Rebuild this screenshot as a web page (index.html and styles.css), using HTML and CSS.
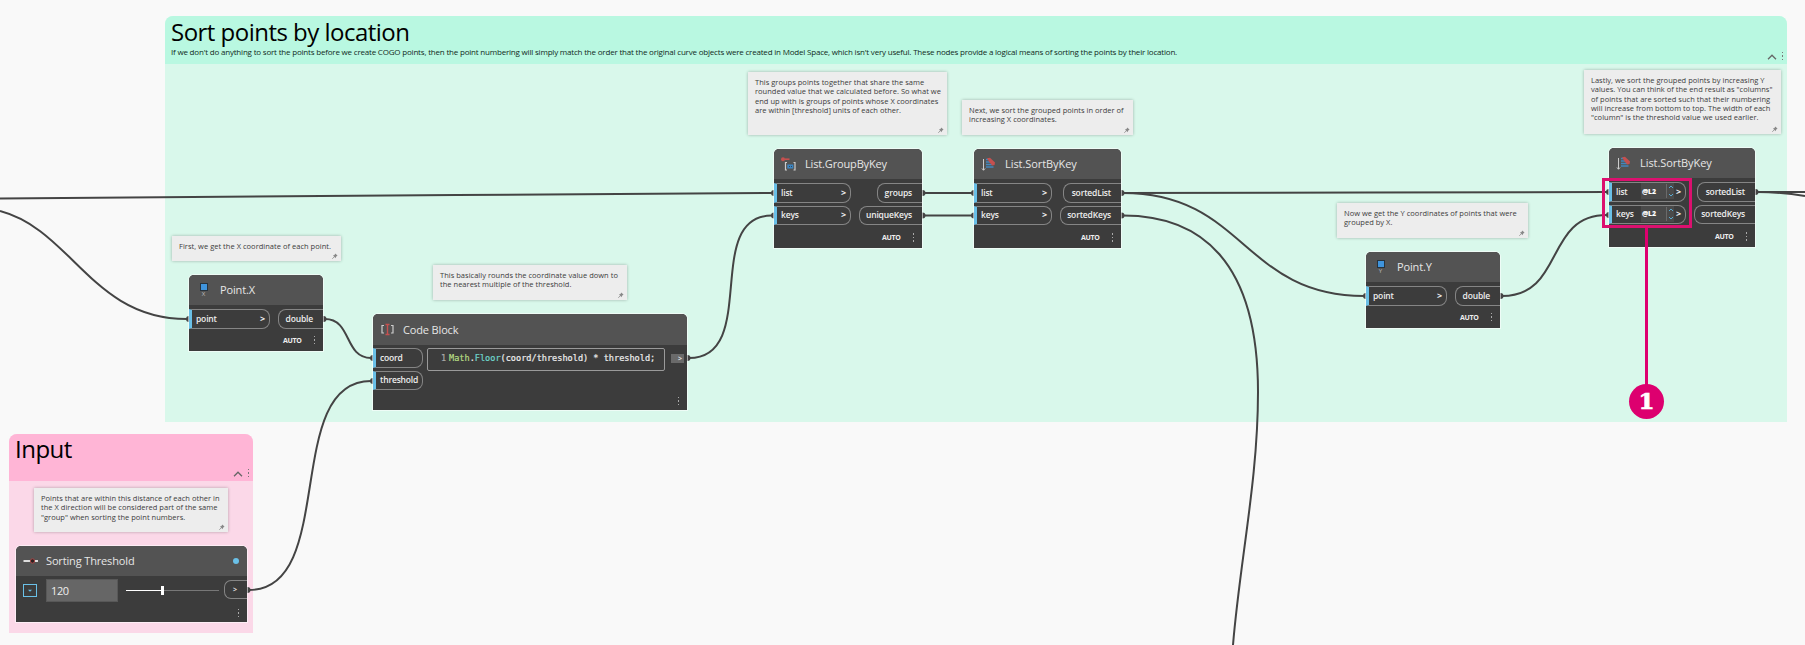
FILE: index.html
```html
<!DOCTYPE html>
<html lang="en">
<head>
<meta charset="utf-8">
<title>Sort points by location</title>
<link rel="stylesheet" href="styles.css">
</head>
<body>
<svg class="defs" width="0" height="0">
  <defs>
    <symbol id="pin" viewBox="0 0 6 6"><path d="M3.300 .4 5.600 2.700 4.900 3 3.900 4 3.700 5.200 .9 2.400 2.100 2.200 3 1.200Z" fill="#888"/><path d="M2.200 3.900.3 5.800" stroke="#888" stroke-width=".8"/></symbol>
    <symbol id="sort" viewBox="0 0 15 15"><path d="M2.500 2V13M1 11.500 2.500 13.300 4 11.500" fill="none" stroke="#ccc"/><path d="M5 2.500H7.500M5 5H9M5 7.500H11M5 10H12.500" stroke="#4387bd" stroke-width="1.400"/><path d="M6 1.200 9 .8 14 5.500 13.600 8 11.200 8.500 8.300 5Z" fill="#c5504f"/></symbol>
  </defs>
</svg>
<main class="canvas">
  <section class="group group-sort">
    <header class="group-head">
      <h1>Sort points by location</h1>
      <p>If we don't do anything to sort the points before we create COGO points, then the point numbering will simply match the order that the original curve objects were created in Model Space, which isn't very useful. These nodes provide a logical means of sorting the points by their location.</p>
      <div class="group-tools"><svg width="10" height="6"><path d="M1 5.200 5 1.200 9 5.200"/></svg><i class="dots"></i></div>
    </header>
  </section>
  <section class="group group-input">
    <header class="group-head">
      <h1>Input</h1>
      <div class="group-tools"><svg width="10" height="6"><path d="M1 5.200 5 1.200 9 5.200"/></svg><i class="dots"></i></div>
    </header>
  </section>

  <svg class="wires" width="1805" height="645">
    <path d="M0 198.500C300 198.500 500 193 772 193"/>
    <path d="M0 211C72 230 92 319 187 319"/>
    <path d="M325 319C352 319 344 358 371 358"/>
    <path d="M249 590C338 590 282 381 371 381"/>
    <path d="M689 358C760 358 702 215.500 772 215.500"/>
    <path d="M924 193H972M924 215.500H972"/>
    <path d="M1123 193C1280 193 1450 192 1607 192"/>
    <path d="M1123 193C1245 193 1243 296 1364 296"/>
    <path d="M1123 215.500C1200 215.500 1258 260 1258 392C1258 480 1240 560 1233 645"/>
    <path d="M1502 296C1565 296 1544 215 1607 215"/>
    <path d="M1757 192H1805M1757 192C1775 192 1790 193.500 1805 196"/>
    <g class="ends">
      <circle cx="189" cy="319" r="3"/><circle cx="323.500" cy="319" r="3"/><circle cx="373" cy="358" r="3"/><circle cx="373" cy="381" r="3"/>
      <circle cx="247.500" cy="590" r="3"/><circle cx="687.500" cy="358" r="3"/><circle cx="774" cy="193" r="3"/><circle cx="774" cy="215.500" r="3"/>
      <circle cx="922.500" cy="193" r="3"/><circle cx="922.500" cy="215.500" r="3"/><circle cx="974" cy="193" r="3"/><circle cx="974" cy="215.500" r="3"/>
      <circle cx="1121.500" cy="193" r="3"/><circle cx="1121.500" cy="215.500" r="3"/><circle cx="1366" cy="296" r="3"/><circle cx="1500.500" cy="296" r="3"/>
      <circle cx="1609" cy="192" r="3"/><circle cx="1609" cy="215" r="3"/><circle cx="1755.500" cy="192" r="3"/>
    </g>
  </svg>

  <aside class="note note-x"><span>First, we get the X coordinate of each point.</span><svg class="pin"><use href="#pin"/></svg></aside>
  <aside class="note note-floor"><span>This basically rounds the coordinate value down to</span><span>the nearest multiple of the threshold.</span><svg class="pin"><use href="#pin"/></svg></aside>
  <aside class="note note-group"><span>This groups points together that share the same</span><span>rounded value that we calculated before. So what we</span><span>end up with is groups of points whose X coordinates</span><span>are within [threshold] units of each other.</span><svg class="pin"><use href="#pin"/></svg></aside>
  <aside class="note note-next"><span>Next, we sort the grouped points in order of</span><span>increasing X coordinates.</span><svg class="pin"><use href="#pin"/></svg></aside>
  <aside class="note note-y"><span>Now we get the Y coordinates of points that were</span><span>grouped by X.</span><svg class="pin"><use href="#pin"/></svg></aside>
  <aside class="note note-last"><span>Lastly, we sort the grouped points by increasing Y</span><span>values. You can think of the end result as "columns"</span><span>of points that are sorted such that their numbering</span><span>will increase from bottom to top. The width of each</span><span>"column" is the threshold value we used earlier.</span><svg class="pin"><use href="#pin"/></svg></aside>
  <aside class="note note-input"><span>Points that are within this distance of each other in</span><span>the X direction will be considered part of the same</span><span>"group" when sorting the point numbers.</span><svg class="pin"><use href="#pin"/></svg></aside>

  <article class="node node-px">
    <header><div class="axis"><i></i><small>X</small></div><h2>Point.X</h2></header>
    <div class="ports">
      <div class="row"><div class="in"><span>point</span><b>&gt;</b></div><div class="out">double</div></div>
    </div>
    <footer><span>AUTO</span><i class="dots"></i></footer>
  </article>

  <article class="node node-code">
    <header><svg class="icon" viewBox="0 0 15 15"><path d="M4 3.500H2V11H4M11 3.500H13V11H11" fill="none" stroke="#ccc" stroke-width="1.200"/><path d="M5.500 2.500H9.500M5.500 12.500H9.500M7.500 2.500V12.500" fill="none" stroke="#c5504f" stroke-width="1.400"/></svg><h2>Code Block</h2></header>
    <div class="code-body">
      <div class="ports">
        <div class="row"><div class="in"><span>coord</span></div></div>
        <div class="row"><div class="in"><span>threshold</span></div></div>
      </div>
      <div class="editor"><span class="ln">1</span><code><span class="cls">Math</span>.<span class="fn">Floor</span>(coord/threshold) * threshold;</code></div>
      <div class="code-out">&gt;</div>
    </div>
    <footer><i class="dots"></i></footer>
  </article>

  <article class="node node-group">
    <header><svg class="icon" viewBox="0 0 15 15"><circle cx="2" cy="2.200" r="2" fill="#c5504f"/><path d="M3.500 2.200H8.500" stroke="#c5504f" stroke-width="1.600"/><path d="M6 5.500H4.500V13H6M12.500 5.500H14V13H12.500" fill="none" stroke="#ccc" stroke-width="1.200"/><path d="M6.300 7.500H12.300V11.500H6.300Z" fill="#3b86c4"/><path d="M8 9.500H8.800M10 9.500H10.800" stroke="#333"/></svg><h2>List.GroupByKey</h2></header>
    <div class="ports">
      <div class="row"><div class="in"><span>list</span><b>&gt;</b></div><div class="out">groups</div></div>
      <div class="row"><div class="in"><span>keys</span><b>&gt;</b></div><div class="out wide">uniqueKeys</div></div>
    </div>
    <footer><span>AUTO</span><i class="dots"></i></footer>
  </article>

  <article class="node node-sort">
    <header><svg class="icon"><use href="#sort"/></svg><h2>List.SortByKey</h2></header>
    <div class="ports">
      <div class="row"><div class="in"><span>list</span><b>&gt;</b></div><div class="out">sortedList</div></div>
      <div class="row"><div class="in"><span>keys</span><b>&gt;</b></div><div class="out wide">sortedKeys</div></div>
    </div>
    <footer><span>AUTO</span><i class="dots"></i></footer>
  </article>

  <article class="node node-py">
    <header><div class="axis"><i></i><small>Y</small></div><h2>Point.Y</h2></header>
    <div class="ports">
      <div class="row"><div class="in"><span>point</span><b>&gt;</b></div><div class="out">double</div></div>
    </div>
    <footer><span>AUTO</span><i class="dots"></i></footer>
  </article>

  <article class="node node-sort node-levels">
    <header><svg class="icon"><use href="#sort"/></svg><h2>List.SortByKey</h2></header>
    <div class="ports">
      <div class="row"><div class="in"><span>list</span><div class="level"><em>@L2</em><svg width="8" height="14"><path d="M2 4 4 2 6 4M2 10 4 12 6 10"/></svg></div><b>&gt;</b></div><div class="out">sortedList</div></div>
      <div class="row"><div class="in"><span>keys</span><div class="level"><em>@L2</em><svg width="8" height="14"><path d="M2 4 4 2 6 4M2 10 4 12 6 10"/></svg></div><b>&gt;</b></div><div class="out wide">sortedKeys</div></div>
    </div>
    <footer><span>AUTO</span><i class="dots"></i></footer>
  </article>

  <article class="node node-thr">
    <header><svg class="icon" viewBox="0 0 15 15"><path d="M.5 7H8M11 7H15" stroke="#ddd" stroke-width="2"/><circle cx="9.500" cy="7" r="2.200" fill="#2c2222" stroke="#a84848"/></svg><h2>Sorting Threshold</h2><i class="status"></i></header>
    <div class="slider-row">
      <div class="toggle"><svg width="12" height="11"><path d="M4 4.800H8L6 6.800Z" fill="#6ac0e7"/></svg></div>
      <div class="value">120</div>
      <div class="slider"><i></i></div>
      <div class="thr-out">&gt;</div>
    </div>
    <footer><i class="dots"></i></footer>
  </article>

  <div class="highlight"></div>
  <div class="leader"></div>
  <div class="callout">1</div>
</main>
</body>
</html>
```
FILE: styles.css
```css
*{box-sizing:border-box;margin:0}
body{background:#f9f9f9;font-family:"Open Sans","Noto Sans",sans-serif;overflow:hidden}
i,em{font-style:normal}
.defs{position:absolute}
.canvas{position:relative;width:1805px;height:645px;overflow:hidden}
.group,.note,.node,.wires,.highlight,.leader,.callout{position:absolute}
.dots{display:block;width:1.500px;height:9px;background:repeating-linear-gradient(currentColor 0 1.500px,transparent 1.500px 3.500px)}

/* groups */
.group{border-radius:8px 8px 0 0;overflow:hidden}
.group-head{position:relative;padding:1px 6px 0;color:#000}
.group-sort{left:165px;top:16px;width:1622px;height:405.500px;background:#d9f8eb}
.group-sort .group-head{height:48px;background:#b9f8e1}
.group-input{left:9px;top:434px;width:244px;height:199px;background:#fbd8e8}
.group-input .group-head{height:47px;padding-top:0;background:#ffb5d6}
.group h1{font-size:24px;font-weight:400;line-height:30px;letter-spacing:-.52px;white-space:nowrap}
.group p{font-size:8px;line-height:10px;letter-spacing:-.195px;white-space:nowrap;color:#102a22}
.group-tools{position:absolute;right:4px;bottom:3px;display:flex;align-items:center;gap:5px;color:#777}
.group-tools path{fill:none;stroke:#666;stroke-width:1.300}

/* wires */
.wires{left:0;top:0}
.wires path{fill:none;stroke:#444;stroke-width:2}
.wires .ends{fill:#444}

/* notes */
.note{padding:6px 7px 0;background:#ededed;color:#3c3c3c;font-size:7.500px;line-height:9.250px;letter-spacing:.02px;box-shadow:0 0 3px rgba(0,0,0,.28)}
.note span{display:block;white-space:nowrap}
.pin{position:absolute;right:3px;bottom:2px;width:6px;height:6px}
.note-x{left:172px;top:236px;width:169px;height:25px}
.note-floor{left:433px;top:265px;width:194px;height:35px}
.note-group{left:748px;top:72px;width:199px;height:63px}
.note-next{left:962px;top:100px;width:171px;height:35px}
.note-y{left:1337px;top:203px;width:191px;height:35px}
.note-last{left:1584px;top:70px;width:197px;height:64px}
.note-input{left:34px;top:488px;width:194px;height:44px}

/* nodes */
.node{display:flex;flex-direction:column;background:#3c3c3c;color:#eee;border-radius:5px 5px 0 0;box-shadow:0 0 0 1px rgba(255,255,255,.55)}
.node header{display:flex;align-items:center;height:30px;padding-left:7px;background:#535353;border-radius:5px 5px 0 0}
.node h2{padding-bottom:1px;font-size:11px;font-weight:500;letter-spacing:-.15px;white-space:nowrap;color:#e6e6e6}
.icon{width:15px;height:15px;margin-right:8px;overflow:visible}
.axis{display:flex;flex-direction:column;align-items:center;width:15px;margin-right:8px;padding-top:3px}
.axis i{width:6px;height:6px;background:#3f94dc;outline:1px solid #27333d}
.axis small{font-size:6px;line-height:9px;color:#bbb}
.ports{display:flex;flex-direction:column;gap:3px;padding-top:4px}
.row{display:flex;justify-content:space-between;height:19.500px;font-size:8.500px;font-weight:600;letter-spacing:-.17px}
.in{display:flex;align-items:center;justify-content:space-between;width:77px;padding:0 4px 1px;border:1px solid #858585;border-left:3px solid #6ac0e7;border-radius:0 8px 8px 0}
.in b{font-size:9px;font-weight:700}
.out{display:flex;align-items:center;justify-content:flex-end;width:45px;padding:0 10px 1px 0;border:1px solid #858585;border-right:0;border-radius:8px 0 0 8px}
.node footer{display:flex;align-items:center;justify-content:flex-end;gap:12px;flex:1;padding:2px 8px 0 0;font-size:7px;font-weight:700;letter-spacing:-.3px}
.node footer .dots{color:#aaa}

.node-px{left:189px;top:275px;width:134px;height:76px}
.node-py{left:1366px;top:252px;width:134px;height:76px}
.node-px .in,.node-py .in{width:81px}
.node-px h2,.node-py h2{padding-left:1px}
.node-group{left:774px;top:149px;width:148px;height:99px}
.node-group h2{padding-left:1px}
.node-group .wide{width:63px}
.node-sort{left:974px;top:149px;width:147px;height:99px}
.node-sort h2{padding-left:1px;letter-spacing:-.07px}
.node-sort .in{width:78px}
.node-sort .out{width:58px}
.node-sort .wide{width:61px}
.node-levels{left:1609px;top:148px;width:146px}
.node-levels .in{width:77px}
.node-levels .in span{width:24px}
.level{display:flex;align-items:center;justify-content:space-between;width:33px;height:16px;margin-left:-1px;background:#4a4a4a}
.level em{padding-left:1px;font-size:7px;font-weight:800;letter-spacing:-.2px;color:#fff}
.level svg{border-left:1px solid #6a6a6a}
.level path{fill:none;stroke:#58a9cf}

/* code block */
.node-code{left:373px;top:314px;width:314px;height:96px}
.node-code header{height:31px}
.code-body{display:flex;align-items:flex-start}
.node-code .ports{padding-top:3px}
.node-code .in{width:50px}
.editor{display:flex;align-items:center;width:238px;height:23px;margin:3px 0 0 4px;padding:0 0 3px 13px;border:1px solid #9a9a9a;border-radius:2px;font:8.570px "DejaVu Sans Mono",monospace;-webkit-text-stroke:.2px;white-space:pre}
.editor .ln{width:8px;color:#aaa}
.editor code{font:inherit}
.cls{color:#b5dc84}
.fn{color:#6fd6cc}
.code-out{width:13px;height:9px;margin:9px 0 0 6px;padding-right:2px;background:#6a6a6a;font-size:7px;line-height:9px;font-weight:600;text-align:right}

/* number slider */
.node-thr{left:16px;top:546px;width:231px;height:76px}
.status{width:6px;height:6px;margin:0 8px 0 auto;border-radius:50%;background:#6ac0e7}
.slider-row{display:flex;align-items:center;height:23px;margin-top:3px;padding-left:7px}
.toggle{width:14px;height:13px;border:1px solid #6ac0e7;line-height:0}
.value{display:flex;align-items:center;width:72px;height:23px;margin-left:9px;padding:0 0 1px 4px;background:#666;border:1px solid #585858;font-size:11px;font-weight:500;letter-spacing:-.4px}
.slider{display:flex;align-items:center;width:93px;height:9px;margin-left:8px;background:linear-gradient(90deg,#fff 38px,#777 38px) center/100% 1px no-repeat}
.slider i{width:3px;height:9px;margin-left:35px;background:#fff}
.thr-out{display:flex;align-items:center;justify-content:center;width:23px;height:19px;margin-left:auto;padding-right:2px;margin-top:-2px;border:1px solid #858585;border-right:0;border-radius:7px 0 0 7px;font-size:7px;font-weight:600}

/* annotation */
.highlight{left:1602px;top:178px;width:90px;height:50px;border:3px solid #dc106f}
.leader{left:1644.500px;top:228px;width:3px;height:158px;background:#dd006f}
.callout{left:1629px;top:383.500px;width:35px;height:35px;border-radius:50%;background:#dd006f;color:#fff;font:700 23px/34px "DejaVu Serif",serif;-webkit-text-stroke:.7px;text-align:center}
```
